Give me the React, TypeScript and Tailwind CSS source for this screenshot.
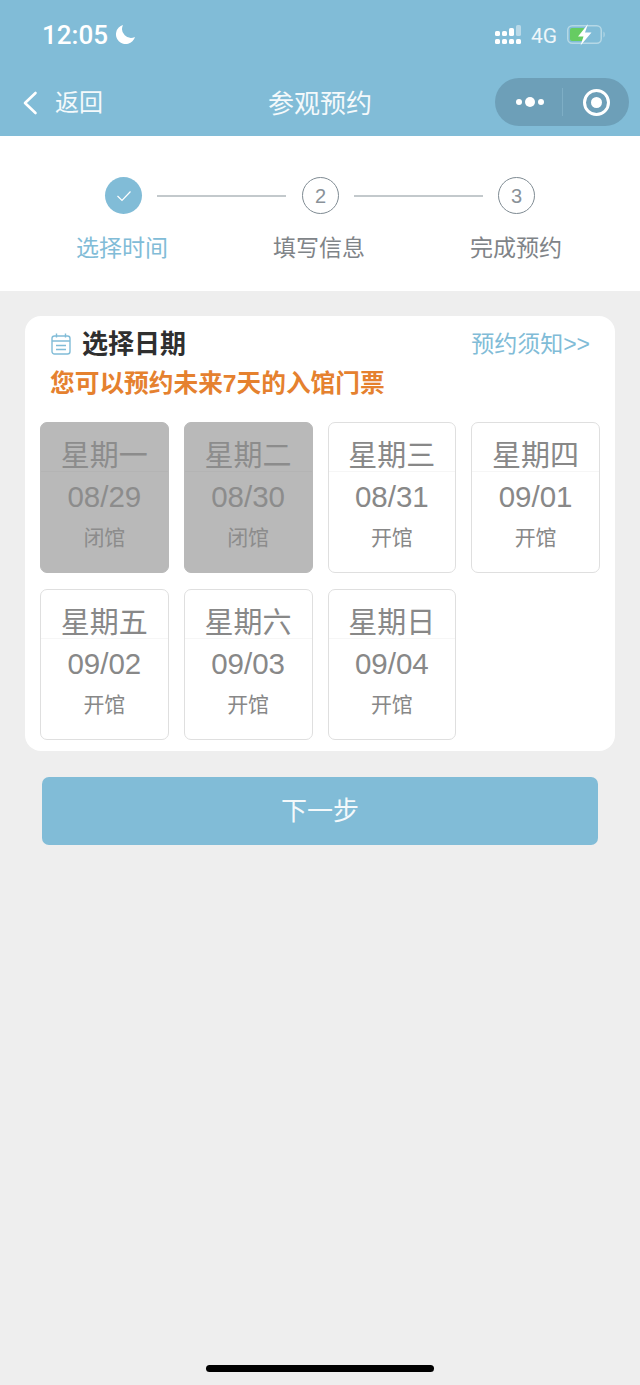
import React from "react";

const FONT = "font-['Liberation_Sans','Noto_Sans_CJK_SC',sans-serif]";

const days = [
  { w: "星期一", d: "08/29", s: "闭馆", off: true },
  { w: "星期二", d: "08/30", s: "闭馆", off: true },
  { w: "星期三", d: "08/31", s: "开馆", off: false },
  { w: "星期四", d: "09/01", s: "开馆", off: false },
  { w: "星期五", d: "09/02", s: "开馆", off: false },
  { w: "星期六", d: "09/03", s: "开馆", off: false },
  { w: "星期日", d: "09/04", s: "开馆", off: false },
];

function Tile({ w, d, s, off }: { w: string; d: string; s: string; off: boolean }) {
  return (
    <div
      className={
        off
          ? "h-[151px] rounded-[7px] border border-[#b9b9b9] bg-[#b9b9b9] text-center text-[#8c8c8c]"
          : "h-[151px] rounded-[7px] border border-[#dfdfdf] bg-white text-center text-[#888888]"
      }
    >
      <div className={off ? "h-[49px] border-b border-[#b4b4b4] pt-[15px] text-[29px] leading-[36px]" : "h-[49px] border-b border-[#f6f6f6] pt-[15px] text-[29px] leading-[36px]"}>{w}</div>
      <div className="mt-[7px] text-[29.5px] leading-[36px]">{d}</div>
      <div className="mt-[8px] text-[21px] leading-[30px]">{s}</div>
    </div>
  );
}

function Circle({ children }: { children: React.ReactNode }) {
  return (
    <div className="flex h-[37px] w-[37px] items-center justify-center rounded-full border border-[#7f8b93] text-[20px] text-[#8a9299]">
      {children}
    </div>
  );
}

function Line() {
  return <div className="h-[2px] w-[129px] bg-[#c3c9cc]" />;
}

export default function App() {
  return (
    <div className={`${FONT} relative flex h-[1385px] w-[640px] flex-col overflow-hidden bg-[#eeeeee]`}>
      {/* header */}
      <div className="h-[136px] bg-[#81bcd7] text-white">
        <div className="flex h-[78px] items-start justify-between pl-[42px] pr-[33px] pt-[20px]">
          <div className="flex items-center gap-[7px]">
            <span className="font-['Roboto'] text-[26px] font-medium leading-[30px]">12:05</span>
            <svg width="21" height="21" viewBox="0 0 21 21" className="-mt-[1px]">
              <path d="M8 1 A9.7 9.7 0 1 0 20 13 A9 9 0 0 1 8 1Z" fill="white" />
            </svg>
          </div>
          <div className="flex items-start gap-[9px] pt-[4px]">
            <svg width="28" height="21" viewBox="0 0 28 21">
              <g fill="white">
                <rect x="1" y="7" width="5" height="5" rx="1.6" /><rect x="8" y="7" width="5" height="5" rx="1.6" />
                <rect x="15" y="4" width="5" height="8" rx="1.6" />
                <rect x="1" y="15" width="5" height="5" rx="1.6" /><rect x="8" y="15" width="5" height="5" rx="1.6" /><rect x="15" y="15" width="5" height="5" rx="1.6" /><rect x="22" y="15" width="5" height="5" rx="1.6" />
              </g>
              <rect x="22" y="1" width="5" height="11" rx="1.6" fill="#b9d9e8" />
            </svg>
            <span className="font-['Roboto'] text-[21px] leading-[24px] text-[#eef6fa]">4G</span>
            <svg width="40" height="22" viewBox="0 0 40 22" className="ml-[1px]">
              <rect x="0.75" y="1.75" width="33.5" height="17.5" rx="4.5" fill="none" stroke="#b5d8e6" strokeWidth="1.5" />
              <rect x="3" y="4" width="15" height="13" rx="2" fill="#66cc62" />
              <path d="M36.5 7.5c1.6 .6 1.6 5.4 0 6z" fill="#b5d8e6" />
              <path d="M21 0 L11 12.5 H16.5 L13.5 21.5 L24.5 8.5 H18 Z" fill="white" />
            </svg>
          </div>
        </div>
        <div className="grid h-[58px] grid-cols-[1fr_auto_1fr] items-start">
          <div className="flex h-[50px] items-center pl-[22px]">
            <svg width="16" height="26" viewBox="0 0 16 26" fill="none">
              <path d="M13.5 3 L3 13 L13.5 23" stroke="white" strokeWidth="2.6" strokeLinecap="round" strokeLinejoin="round" />
            </svg>
            <span className="ml-[17px] text-[24px] leading-[30px] text-[#f4f9fb]">返回</span>
          </div>
          <div className="flex h-[50px] items-center pt-[1px] text-[26px] leading-[30px] text-[#f4f9fb]">参观预约</div>
          <div className="flex justify-end pr-[11px]">
            <div className="flex h-[48px] w-[134px] items-center rounded-full bg-[#6d9fb8]">
              <div className="flex w-[67px] items-center justify-center gap-[3px] pl-[3px]">
                <span className="h-[6px] w-[6px] rounded-full bg-white" />
                <span className="h-[10px] w-[10px] rounded-full bg-white" />
                <span className="h-[6px] w-[6px] rounded-full bg-white" />
              </div>
              <div className="h-[28px] w-px bg-[#7eaec5]" />
              <div className="flex flex-1 items-center justify-center">
                <div className="flex h-[27px] w-[27px] items-center justify-center rounded-full border-[3px] border-white">
                  <span className="h-[11px] w-[11px] rounded-full bg-white" />
                </div>
              </div>
            </div>
          </div>
        </div>
      </div>

      {/* steps */}
      <div className="flex h-[155px] flex-col items-center bg-white pt-[41px]">
        <div className="flex items-center gap-[15px]">
          <div className="flex h-[37px] w-[37px] items-center justify-center rounded-full bg-[#81bcd7]">
            <svg width="16" height="12" viewBox="0 0 16 12" fill="none">
              <path d="M1.5 6 L6 10.5 L14.5 1.5" stroke="white" strokeWidth="1.2" />
            </svg>
          </div>
          <Line />
          <div className="ml-px">
            <Circle>2</Circle>
          </div>
          <Line />
          <Circle>3</Circle>
        </div>
        <div className="mr-[2px] mt-[18px] flex text-center text-[23px] leading-[32px] text-[#7f8488]">
          <div className="w-[197px] text-[#81bcd7]">选择时间</div>
          <div className="w-[197px]">填写信息</div>
          <div className="w-[197px]">完成预约</div>
        </div>
      </div>

      {/* card */}
      <div className="mx-[25px] mt-[25px] h-[435px] rounded-[16px] bg-white px-[15px] pt-[10px]">
        <div className="flex items-center justify-between pl-[11px] pr-[10px]">
          <div className="flex items-center gap-[11px]">
            <svg width="20" height="22" viewBox="0 0 20 22" fill="none" stroke="#81bcd7" strokeWidth="1.4">
              <rect x="1" y="3" width="18" height="18" rx="2.5" />
              <path d="M5.5 0.5v4M14.5 0.5v4M1 8h18M5 12.5h10M5 16.5h10" />
            </svg>
            <span className="text-[26px] font-bold leading-[36px] text-[#2f2f2f]">选择日期</span>
          </div>
          <span className="text-[23px] leading-[36px] text-[#81bcd7]">预约须知&gt;&gt;</span>
        </div>
        <div className="mt-[5px] pl-[10px] text-[24.7px] font-bold leading-[34px] text-[#e5812f]">您可以预约未来7天的入馆门票</div>
        <div className="mt-[21px] grid grid-cols-4 gap-x-[15px] gap-y-[16px]">
          {days.map((x) => (
            <Tile key={x.w} {...x} />
          ))}
        </div>
      </div>

      {/* button */}
      <div className="mx-[42px] mt-[26px] flex h-[68px] items-center justify-center rounded-[7px] bg-[#81bcd7] text-[26px] text-[#f4f9fb]">
        下一步
      </div>

      <div className="flex-1" />
      <div className="mx-auto mb-[13px] h-[7px] w-[228px] rounded-full bg-black" />
    </div>
  );
}
